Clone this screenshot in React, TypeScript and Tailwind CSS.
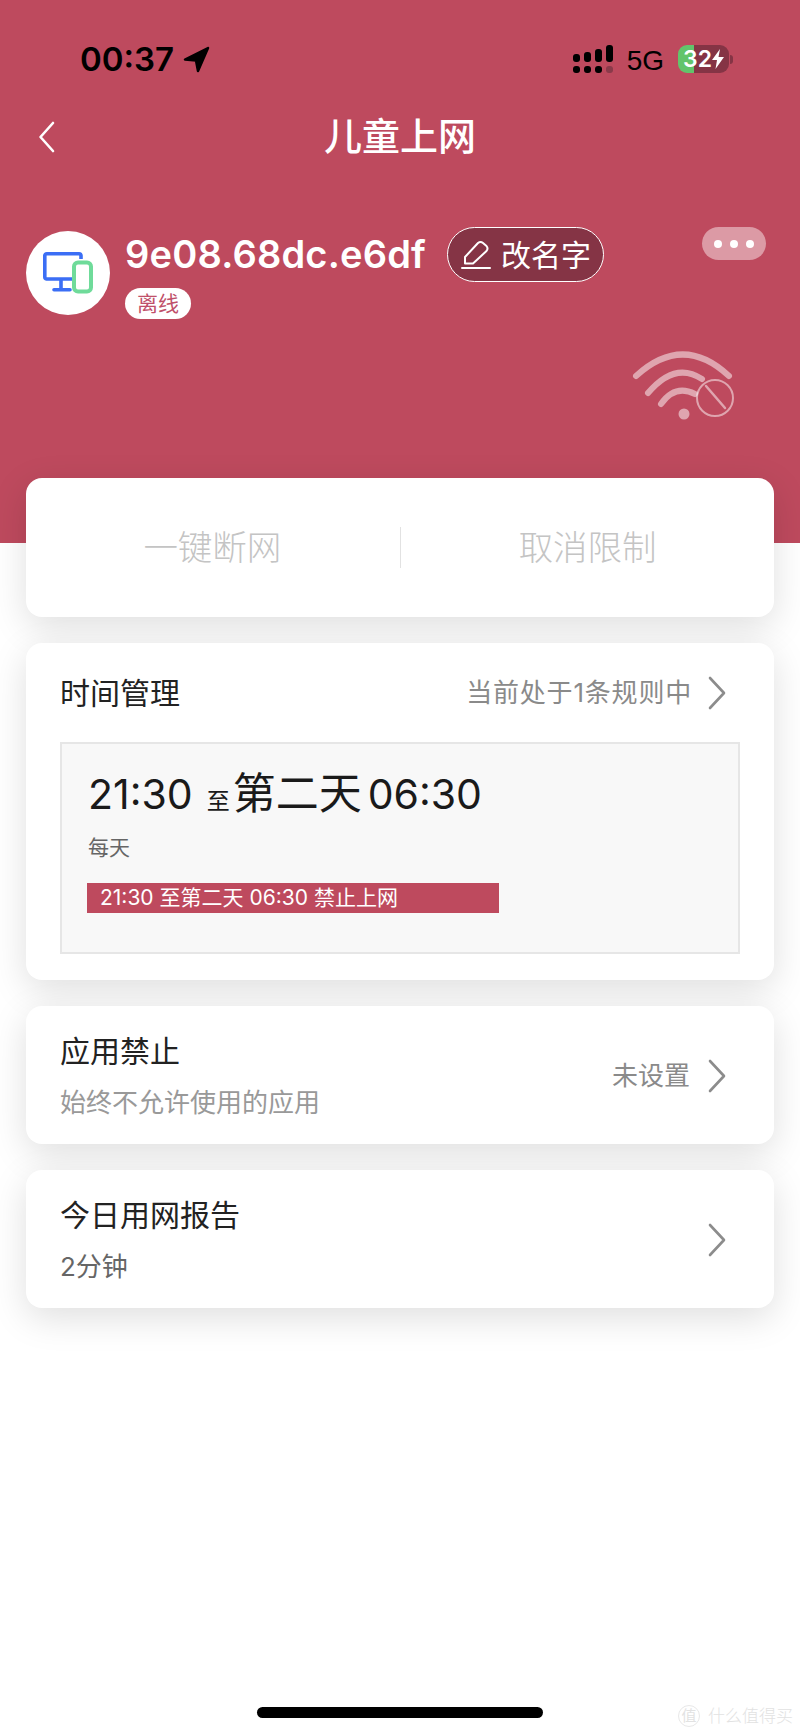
const cjk = "font-['Inter','Noto_Sans_CJK_SC',sans-serif]";

function Chevron() {
  return (
    <svg width="18" height="34" viewBox="0 0 18 34" fill="none" stroke="#8c8c8c" strokeWidth="2.6" strokeLinecap="round" strokeLinejoin="round">
      <path d="M2 2 L16 17 L2 32" />
    </svg>
  );
}

function StatusBar() {
  return (
    <div className="flex items-center justify-between h-[28px] pl-[80px] pr-[67px]">
      <div className="flex items-center gap-[9px]">
        <span className="font-['Inter',sans-serif] font-semibold text-[33px] leading-[28px] text-black">00:37</span>
        <svg width="27" height="27" viewBox="0 0 27 27" fill="#000" stroke="#000" strokeWidth="2.5" strokeLinejoin="round">
          <path d="M25 2 L2 13.5 L13 14.5 L15 25 Z" />
        </svg>
      </div>
      <div className="flex items-center">
        <svg width="40" height="28" viewBox="0 0 40 28" fill="#000">
          <rect x="0" y="9" width="7" height="8" rx="3" />
          <rect x="11" y="7" width="7" height="10" rx="3" />
          <rect x="22" y="4" width="7" height="13" rx="3" />
          <rect x="33" y="0" width="7" height="17" rx="3" />
          <rect x="0" y="21" width="7" height="7" rx="3" />
          <rect x="11" y="21" width="7" height="7" rx="3" />
          <rect x="22" y="21" width="7" height="7" rx="3" />
          <rect x="33" y="21" width="7" height="7" rx="3" fill="#8a3a4a" />
        </svg>
        <span className="ml-[14px] mt-[3px] font-['Liberation_Sans',sans-serif] text-[28px] leading-[28px] text-black">5G</span>
        <div className="ml-[14px] flex items-center justify-center w-[51px] h-[28px] rounded-[9px] bg-[linear-gradient(90deg,#62c46b_31%,#853445_31%)]">
          <span className="font-['Inter',sans-serif] font-semibold text-[23px] leading-[28px] text-white">32</span>
          <svg width="12" height="20" viewBox="0 0 12 20" fill="#fff">
            <path d="M8 0 L0 11 L5 11 L3.5 20 L12 8 L6.5 8 Z" />
          </svg>
        </div>
        <div className="ml-[1px] w-[3px] h-[9px] rounded-r-full bg-[#853445]" />
      </div>
    </div>
  );
}

function DeviceIcon() {
  return (
    <svg width="50" height="42" viewBox="0 0 50 42" fill="none">
      <path d="M32 27 H3.500 A2 2 0 0 1 1.800 25 V3.800 A2 2 0 0 1 3.800 1.800 H36 A2 2 0 0 1 38 3.800 V7" stroke="#3b6ef5" strokeWidth="3.600" />
      <path d="M18 28 V36 M11 37.800 H27" stroke="#3b6ef5" strokeWidth="3.600" strokeLinecap="round" />
      <rect x="31" y="10.500" width="17" height="29" rx="4" fill="#fff" stroke="#6fdb9a" strokeWidth="4" />
    </svg>
  );
}

function WifiOff() {
  return (
    <svg width="105" height="80" viewBox="0 0 105 80" fill="none" stroke="#fff" strokeOpacity="0.5" strokeLinecap="round">
      <path d="M6 30 Q53 -13 99 30" strokeWidth="6" />
      <path d="M18 47 Q45 15 72 33" strokeWidth="6" />
      <path d="M31 58 Q45 38 65 48" strokeWidth="6" />
      <circle cx="54" cy="68" r="5.500" fill="#fff" fillOpacity="0.5" stroke="none" />
      <circle cx="85" cy="52" r="18" strokeWidth="2" />
      <path d="M76 40 L95 62" strokeWidth="2.500" />
    </svg>
  );
}

function Header() {
  return (
    <div className="h-[543px] bg-[#be4a5e] pt-[45px]">
      <StatusBar />
      <div className="relative flex items-center justify-center h-[36px] mt-[45px]">
        <svg className="absolute left-[38px] top-[3px]" width="18" height="32" viewBox="0 0 18 32" fill="none" stroke="#fff" strokeWidth="2.6" strokeLinecap="round" strokeLinejoin="round">
          <path d="M15 2 L2.500 16 L15 30" />
        </svg>
        <h1 className="text-[38px] leading-[36px] font-medium text-white">儿童上网</h1>
      </div>
      <div className="flex items-start justify-between mt-[73px] pl-[26px] pr-[34px]">
        <div className="flex items-start">
          <div className="flex items-center justify-center w-[84px] h-[84px] mt-[4px] rounded-full bg-white">
            <DeviceIcon />
          </div>
          <div className="ml-[15px]">
            <div className="flex items-center h-[55px]">
              <span className="font-['Inter',sans-serif] font-semibold text-[38px] tracking-[0.2px] leading-[55px] text-white">9e08.68dc.e6df</span>
              <div className="flex items-center ml-[21px] pl-[13px] w-[157px] h-[55px] rounded-full bg-[#853445] border-[1.5px] border-white">
                <svg width="30" height="30" viewBox="0 0 30 30" fill="none" stroke="#fff" strokeWidth="2" strokeLinecap="round" strokeLinejoin="round">
                  <path d="M4 23.500 V17 L17 3 Q19.500 1 22 3 L25.500 6 Q27.500 8.500 25.500 11 L12 23.500 Z" />
                  <path d="M1 28 H29" />
                </svg>
                <span className="ml-[10px] text-[30px] leading-[40px] text-white">改名字</span>
              </div>
            </div>
            <div className="flex items-center justify-center w-[66px] h-[31px] mt-[6px] rounded-full bg-white text-[21px] leading-[31px] text-[#c0506a]">离线</div>
          </div>
        </div>
        <div className="flex items-center justify-center gap-[8px] w-[64px] h-[33px] rounded-full bg-[#dc9aa5]">
          <span className="w-[8px] h-[8px] rounded-full bg-white" />
          <span className="w-[8px] h-[8px] rounded-full bg-white" />
          <span className="w-[8px] h-[8px] rounded-full bg-white" />
        </div>
      </div>
      <div className="flex justify-end pr-[65px] mt-[27px]">
        <WifiOff />
      </div>
    </div>
  );
}

const cardClass = "rounded-[16px] bg-white shadow-[0_10px_36px_rgba(0,0,0,0.13)]";

function NavCard({ title, sub, subColor, right }: { title: string; sub: string; subColor: string; right?: string }) {
  return (
    <div className={`${cardClass} flex items-center justify-between h-[138px] pl-[34px] pr-[48px]`}>
      <div className="pt-[1px]">
        <div className="text-[30px] leading-[40px] text-[#222]">{title}</div>
        <div className={`mt-[14px] text-[26px] leading-[36px] ${subColor}`}>{sub}</div>
      </div>
      <div className="flex items-center gap-[18px] pt-[1px]">
        {right && <span className="text-[26px] leading-[36px] text-[#8a8a8a]">{right}</span>}
        <Chevron />
      </div>
    </div>
  );
}

export default function App() {
  return (
    <div className={`${cjk} relative flex flex-col w-[800px] h-[1734px] overflow-hidden bg-white`}>
      <Header />

      <div className="relative flex flex-col gap-[26px] -mt-[65px] px-[26px]">
        <div className={`${cardClass} flex items-center h-[139px]`}>
          <div className="flex-1 text-center text-[34.5px] leading-[44px] font-light text-[#c4c4c4]">一键断网</div>
          <div className="ml-px w-[1.5px] h-[41px] bg-[#e2e2e2]" />
          <div className="flex-1 text-center text-[34.5px] leading-[44px] font-light text-[#c4c4c4]">取消限制</div>
        </div>

        <div className={`${cardClass} h-[337px] pt-[30px] pl-[34px] pr-[34px]`}>
          <div className="flex items-center justify-between pr-[14px]">
            <span className="text-[30px] leading-[40px] text-[#222]">时间管理</span>
            <div className="flex items-center gap-[16px]">
              <span className="text-[26px] tracking-[0.8px] leading-[36px] text-[#8a8a8a]">当前处于1条规则中</span>
              <Chevron />
            </div>
          </div>
          <div className="h-[212px] mt-[29px] pt-[23px] pl-[25px] bg-[#f8f8f8] border-2 border-[#e6e6e6]">
            <div className="flex items-baseline ml-px text-[41px] leading-[52px] text-[#1a1a1a]">
              <span>21:30</span>
              <span className="ml-[14px] text-[23px]">至</span>
              <span className="ml-[3px] text-[43px]">第二天</span>
              <span className="ml-[6px]">06:30</span>
            </div>
            <div className="mt-[7px] ml-px text-[21px] leading-[28px] text-[#666]">每天</div>
            <div className="flex items-center w-[412px] h-[30px] mt-[21px] pl-[13px] bg-[#be4a5e] text-[21px] leading-[30px] text-white">
              21:30 至第二天 06:30 禁止上网
            </div>
          </div>
        </div>

        <NavCard title="应用禁止" sub="始终不允许使用的应用" subColor="text-[#999]" right="未设置" />
        <NavCard title="今日用网报告" sub="2分钟" subColor="text-[#666]" />
      </div>

      <div className="flex justify-center mt-auto pb-[16px]">
        <div className="w-[286px] h-[11px] rounded-full bg-black" />
      </div>

      {/* watermark sits over the corner */}
      <div className="absolute right-[7px] bottom-[7px] flex items-center gap-[8px] text-[#e2e2e2]">
        <span className="flex items-center justify-center w-[22px] h-[22px] rounded-full border border-[#e8e8e8] text-[15px] leading-[20px]">值</span>
        <span className="text-[17px] leading-[22px] font-light">什么值得买</span>
      </div>
    </div>
  );
}
